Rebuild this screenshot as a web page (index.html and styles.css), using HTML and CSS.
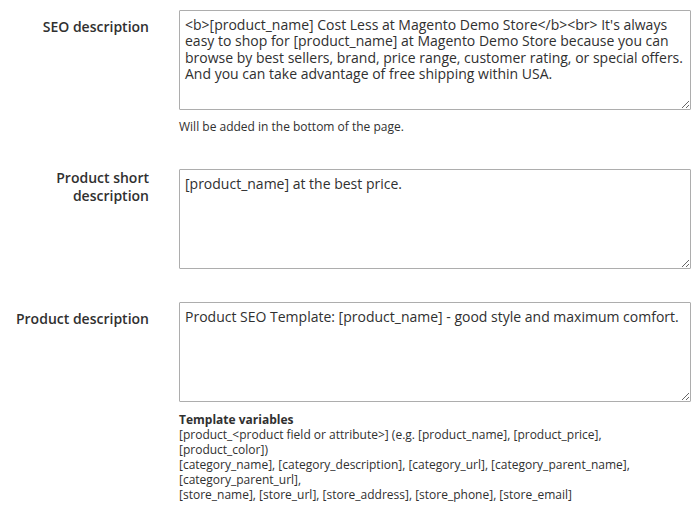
FILE: index.html
```html
<!DOCTYPE html>
<html>
<head>
<meta charset="utf-8">
<link rel="stylesheet" href="styles.css">
</head>
<body>
<div class="form">
  <div class="field field-seo">
    <label class="label">SEO description</label>
    <div class="control">
      <textarea class="textarea">&lt;b&gt;[product_name] Cost Less at Magento Demo Store&lt;/b&gt;&lt;br&gt; It's always easy to shop for [product_name] at Magento Demo Store because you can browse by best sellers, brand, price range, customer rating, or special offers. And you can take advantage of free shipping within USA.</textarea>
      <div class="note">Will be added in the bottom of the page.</div>
    </div>
  </div>
  <div class="field field-short">
    <label class="label label-multi">Product short<br>description</label>
    <div class="control">
      <textarea class="textarea">[product_name] at the best price.</textarea>
    </div>
  </div>
  <div class="field field-desc">
    <label class="label">Product description</label>
    <div class="control">
      <textarea class="textarea">Product SEO Template: [product_name] - good style and maximum comfort.</textarea>
      <div class="vars">
        <div class="vars-title">Template variables</div>
        <div>[product_&lt;product field or attribute&gt;] (e.g. [product_name], [product_price],<br>[product_color])<br>[category_name], [category_description], [category_url], [category_parent_name],<br>[category_parent_url],<br>[store_name], [store_url], [store_address], [store_phone], [store_email]</div>
      </div>
    </div>
  </div>
</div>
</body>
</html>
```

FILE: styles.css
```css
html, body {
  margin: 0;
  padding: 0;
  background: #ffffff;
}
body {
  font-family: "Open Sans", "Noto Sans", sans-serif;
  color: #303030;
}
.form {
  display: flex;
  flex-direction: column;
  padding-top: 10px;
}
.field {
  display: grid;
  grid-template-columns: 149px 512px;
  column-gap: 30px;
  align-items: start;
}
.field-short {
  margin-top: 35px;
}
.field-desc {
  margin-top: 33px;
}
.label {
  text-align: right;
  font-weight: 600;
  font-size: 14px;
  line-height: 18px;
  padding-top: 8px;
  color: #303030;
}
.label-multi {
  padding-top: 0;
}
.control {
  display: flex;
  flex-direction: column;
}
.textarea {
  box-sizing: border-box;
  width: 512px;
  height: 100px;
  margin: 0;
  border: 1px solid #adadad;
  border-radius: 1px;
  padding: 6px 5px 5px;
  font-family: "Open Sans", "Noto Sans", sans-serif;
  font-size: 14px;
  line-height: 16.3px;
  color: #303030;
  resize: vertical;
  overflow: hidden;
}
.note {
  margin-top: 9px;
  font-size: 12px;
  line-height: 15px;
  color: #303030;
}
.vars {
  margin-top: 10px;
  font-size: 12px;
  line-height: 15px;
  color: #303030;
}
.vars-title {
  font-weight: 700;
  font-size: 12px;
}
```
